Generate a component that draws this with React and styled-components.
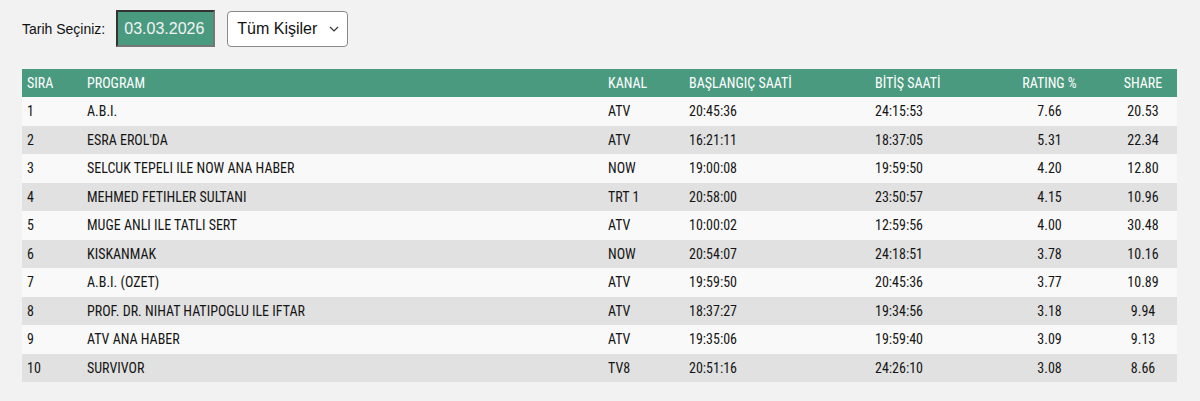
import styled, { createGlobalStyle } from 'styled-components'

const GlobalStyle = createGlobalStyle`
  body {
    margin: 0;
    background: #f2f2f2;
    font-family: 'Liberation Sans', Arial, sans-serif;
  }
`

const Page = styled.div`
  padding: 10px 22px 0 22px;
`

const Toolbar = styled.div`
  display: flex;
  align-items: center;
  height: 37px;
  margin-bottom: 22px;
`

const Label = styled.span`
  font-size: 14px;
  color: #111;
  margin-right: 11px;
`

const DateBox = styled.div`
  box-sizing: border-box;
  width: 99px;
  height: 37px;
  display: flex;
  align-items: center;
  padding-left: 6px;
  background: #4a9a80;
  color: #f4f4f4;
  font-size: 16px;
  border: 2px solid #333;
  border-right-color: #777;
  border-bottom-color: #777;
  margin-right: 12px;
`

const Select = styled.div`
  box-sizing: border-box;
  width: 121px;
  height: 36px;
  display: flex;
  align-items: center;
  justify-content: space-between;
  padding: 0 8px 0 9px;
  background: #fff;
  border: 1px solid #8a8a8a;
  border-radius: 4px;
  font-size: 16px;
  color: #111;
`

const Table = styled.table`
  width: 1155px;
  border-collapse: collapse;
  table-layout: fixed;
  font-family: 'Roboto Condensed', 'Liberation Sans Narrow', 'DejaVu Sans Condensed', sans-serif;
  font-size: 14px;
`

const Th = styled.th`
  background: #4a9a80;
  color: #fff;
  font-weight: 400;
  height: 28px;
  padding: 0 0 0 5px;
  text-align: ${(p) => (p.$center ? 'center' : 'left')};
`

const Row = styled.tr`
  background: ${(p) => (p.$odd ? '#e1e1e1' : '#f9f9f9')};
`

const Td = styled.td`
  height: 28.5px;
  padding: 0 0 0 5px;
  color: #151515;
  text-align: ${(p) => (p.$center ? 'center' : 'left')};
`

const rows = [
  ['1', 'A.B.I.', 'ATV', '20:45:36', '24:15:53', '7.66', '20.53'],
  ['2', "ESRA EROL'DA", 'ATV', '16:21:11', '18:37:05', '5.31', '22.34'],
  ['3', 'SELCUK TEPELI ILE NOW ANA HABER', 'NOW', '19:00:08', '19:59:50', '4.20', '12.80'],
  ['4', 'MEHMED FETIHLER SULTANI', 'TRT 1', '20:58:00', '23:50:57', '4.15', '10.96'],
  ['5', 'MUGE ANLI ILE TATLI SERT', 'ATV', '10:00:02', '12:59:56', '4.00', '30.48'],
  ['6', 'KISKANMAK', 'NOW', '20:54:07', '24:18:51', '3.78', '10.16'],
  ['7', 'A.B.I. (OZET)', 'ATV', '19:59:50', '20:45:36', '3.77', '10.89'],
  ['8', 'PROF. DR. NIHAT HATIPOGLU ILE IFTAR', 'ATV', '18:37:27', '19:34:56', '3.18', '9.94'],
  ['9', 'ATV ANA HABER', 'ATV', '19:35:06', '19:59:40', '3.09', '9.13'],
  ['10', 'SURVIVOR', 'TV8', '20:51:16', '24:26:10', '3.08', '8.66'],
]

const widths = [60, 521, 81, 186, 120, 114, 73]

export default function App() {
  return (
    <>
      <GlobalStyle />
      <Page>
        <Toolbar>
          <Label>Tarih Seçiniz:</Label>
          <DateBox>03.03.2026</DateBox>
          <Select>
            Tüm Kişiler
            <svg width="10" height="6" viewBox="0 0 10 6">
              <path d="M1 1l4 4 4-4" fill="none" stroke="#333" strokeWidth="1.2" />
            </svg>
          </Select>
        </Toolbar>
        <Table>
          <colgroup>
            {widths.map((w, i) => (
              <col key={i} style={{ width: w }} />
            ))}
          </colgroup>
          <thead>
            <tr>
              <Th>SIRA</Th>
              <Th>PROGRAM</Th>
              <Th>KANAL</Th>
              <Th>BAŞLANGIÇ SAATİ</Th>
              <Th>BİTİŞ SAATİ</Th>
              <Th $center>RATING %</Th>
              <Th $center>SHARE</Th>
            </tr>
          </thead>
          <tbody>
            {rows.map((r, i) => (
              <Row key={r[0]} $odd={i % 2 === 1}>
                {r.map((c, j) => (
                  <Td key={j} $center={j >= 5}>
                    {c}
                  </Td>
                ))}
              </Row>
            ))}
          </tbody>
        </Table>
      </Page>
    </>
  )
}
